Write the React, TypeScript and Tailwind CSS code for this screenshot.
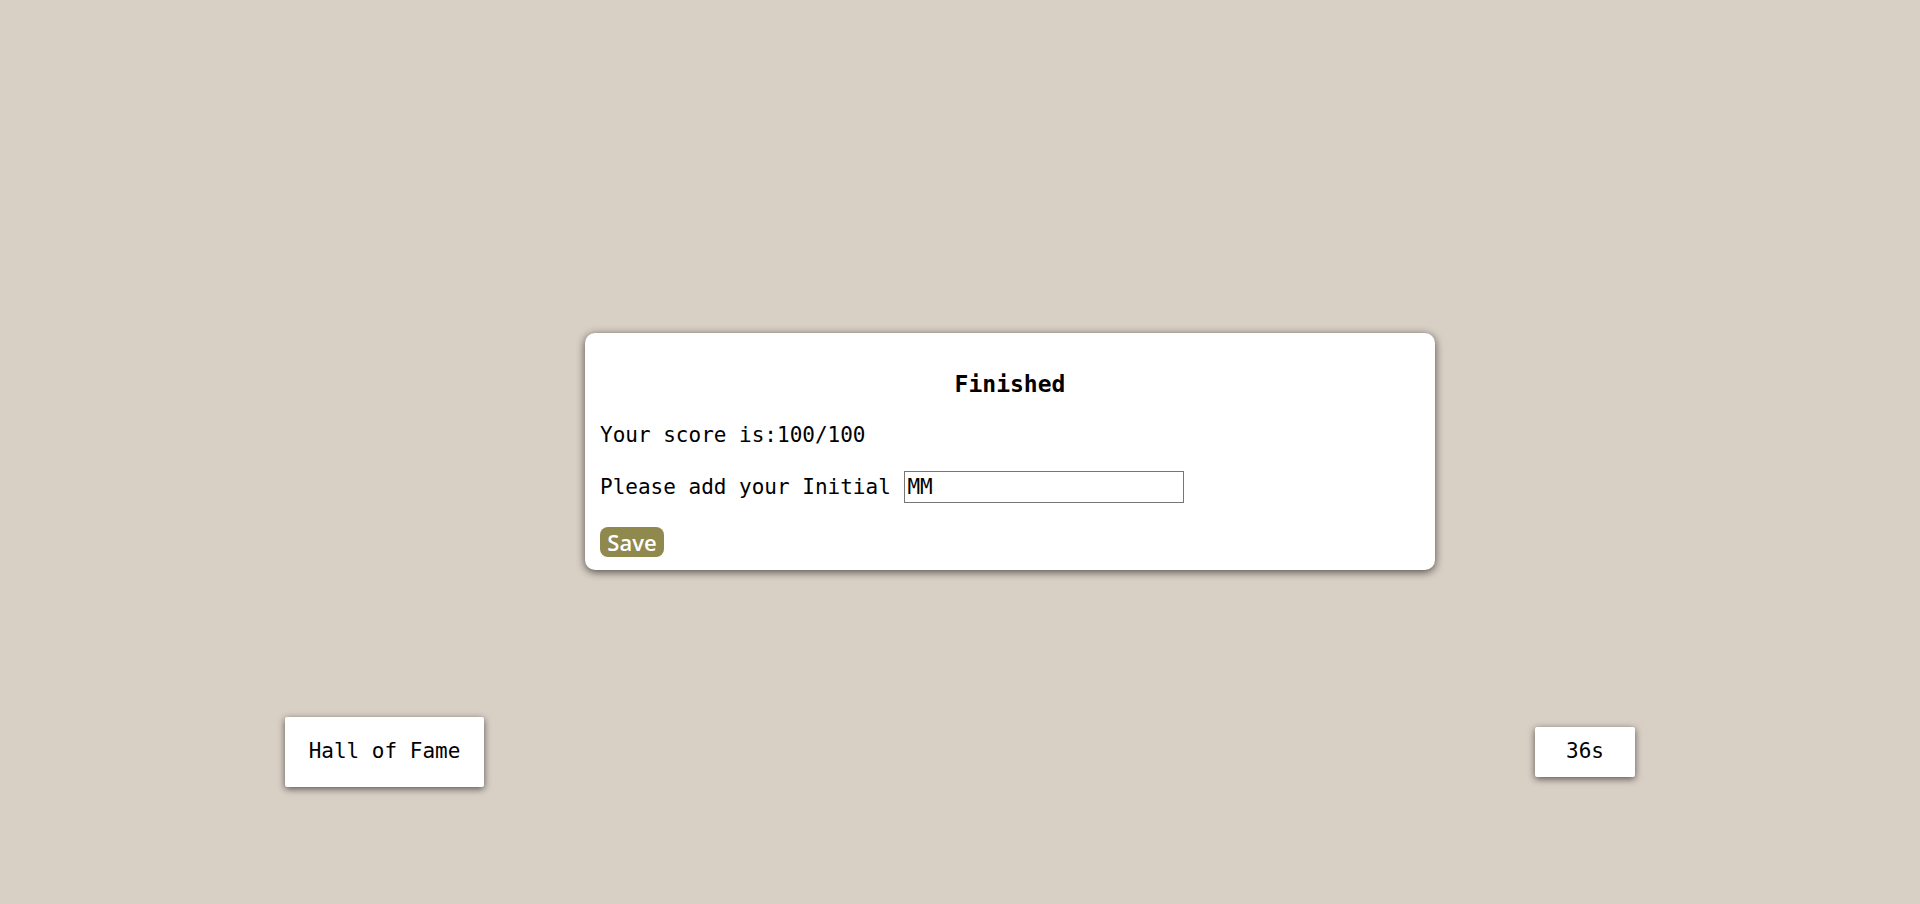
import React from "react";

export default function App() {
  const mono = { fontFamily: '"DejaVu Sans Mono", monospace' };
  return (
    <div
      className="min-h-screen w-full bg-[#d8cfc5] flex flex-col text-black"
      style={mono}
    >
      <div className="pt-[333px] pl-[585px]">
        <div className="w-[850px] bg-white rounded-[10px] shadow-[0_2px_9px_rgba(0,0,0,0.65)] pt-[38px] pb-[13px] px-[15px]">
          <div className="text-center font-bold text-[23px] leading-[27px]">
            Finished
          </div>
          <div className="mt-[25px] text-[21px] leading-[24px]">
            Your score is:100/100
          </div>
          <div className="mt-[24px] flex items-center text-[21px] leading-[24px]">
            <span className="whitespace-pre">Please add your Initial </span>
            <input
              defaultValue="MM"
              className="ml-[1px] w-[280px] h-[32px] border border-[#767676] px-[2px] text-[21px] outline-none bg-white"
              style={mono}
            />
          </div>
          <div className="mt-[24px]">
            <button
              className="h-[30px] w-[64px] flex items-center justify-center rounded-[8px] bg-[#8f894d] text-white text-[22px] font-semibold leading-[30px]"
              style={{ fontFamily: '"Open Sans", "Noto Sans", sans-serif' }}
            >
              Save
            </button>
          </div>
        </div>
      </div>
      <div className="mt-[147px] flex items-center justify-between pl-[285px] pr-[285px]">
        <div className="w-[199px] h-[70px] bg-white flex items-center justify-center text-[21px] shadow-[0_2px_7px_rgba(0,0,0,0.6)] rounded-[2px]">
          Hall of Fame
        </div>
        <div className="w-[100px] h-[50px] bg-white flex items-center justify-center text-[21px] shadow-[0_2px_7px_rgba(0,0,0,0.6)] rounded-[2px]">
          36s
        </div>
      </div>
    </div>
  );
}
